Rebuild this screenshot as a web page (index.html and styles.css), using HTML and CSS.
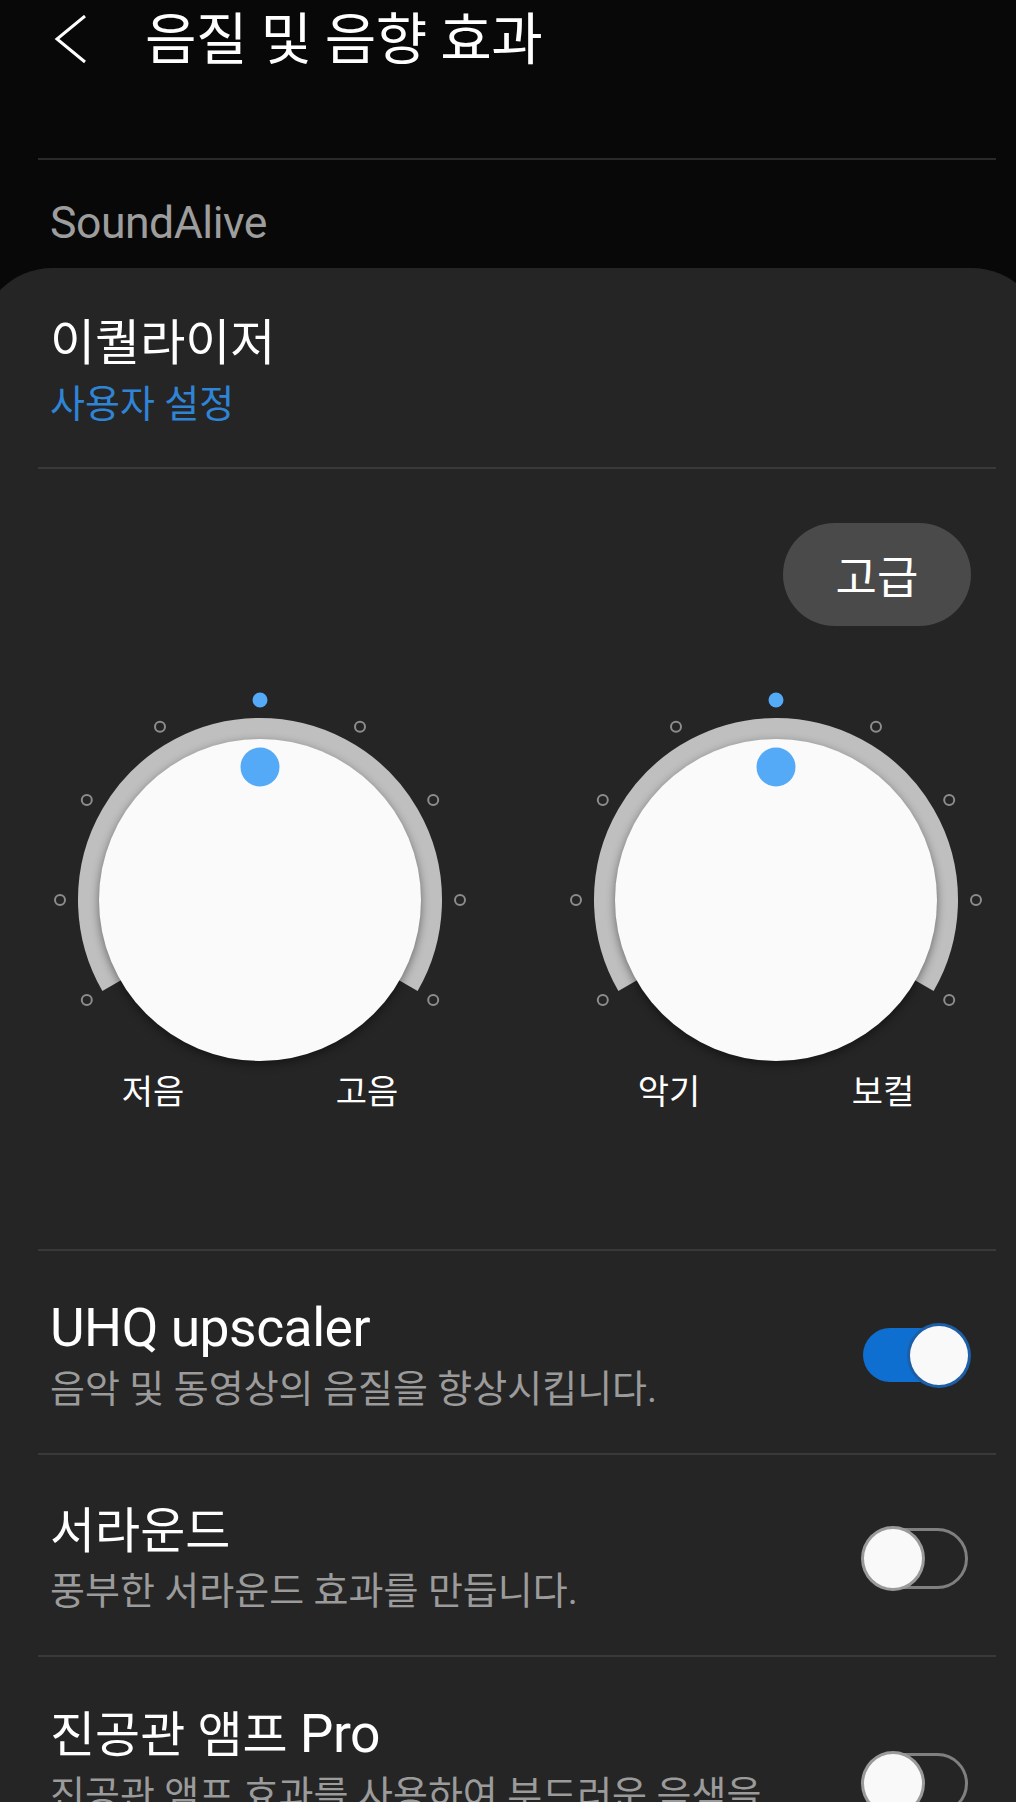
FILE: index.html
```html
<!DOCTYPE html>
<html lang="ko">
<head>
<meta charset="utf-8">
<title>음질 및 음향 효과</title>
<link rel="stylesheet" href="styles.css">
</head>
<body>
<div class="screen">
  <header class="appbar">
    <svg class="back" viewBox="0 0 36 50" width="36" height="50"><path d="M31 1 L3 24 L31 47" fill="none" stroke="#ffffff" stroke-width="3"/></svg>
    <h1 class="page-title">음질 및 음향 효과</h1>
  </header>
  <div class="top-divider"></div>
  <div class="section-label">SoundAlive</div>

  <section class="card">
    <div class="eq-head">
      <div class="item-title">이퀄라이저</div>
      <div class="item-sub blue">사용자 설정</div>
    </div>
    <div class="divider"></div>

    <div class="eq-panel">
      <div class="adv-row"><button class="adv">고급</button></div>
      <div class="knobs">
        <div class="knob">
          <svg class="dial" viewBox="0 0 440 372" width="440" height="372">
            <path d="M71.9 295.5 A171 171 0 1 1 368.1 295.5" fill="none" stroke="#bfbfbf" stroke-width="22"/>
            <circle class="disc" cx="220" cy="210" r="161" fill="#fafafa"/>
            <circle cx="220" cy="77" r="19.5" fill="#55aaf7"/>
            <g fill="none" stroke="#8c8c8c" stroke-width="2">
              <circle cx="46.8" cy="310" r="5"/>
              <circle cx="20" cy="210" r="5"/>
              <circle cx="46.8" cy="110" r="5"/>
              <circle cx="120" cy="36.8" r="5"/>
              <circle cx="320" cy="36.8" r="5"/>
              <circle cx="393.2" cy="110" r="5"/>
              <circle cx="420" cy="210" r="5"/>
              <circle cx="393.2" cy="310" r="5"/>
            </g>
            <circle cx="220" cy="10" r="7.5" fill="#55aaf7"/>
          </svg>
          <div class="labels"><span>저음</span><span>고음</span></div>
        </div>
        <div class="knob">
          <svg class="dial" viewBox="0 0 440 372" width="440" height="372">
            <path d="M71.9 295.5 A171 171 0 1 1 368.1 295.5" fill="none" stroke="#bfbfbf" stroke-width="22"/>
            <circle class="disc" cx="220" cy="210" r="161" fill="#fafafa"/>
            <circle cx="220" cy="77" r="19.5" fill="#55aaf7"/>
            <g fill="none" stroke="#8c8c8c" stroke-width="2">
              <circle cx="46.8" cy="310" r="5"/>
              <circle cx="20" cy="210" r="5"/>
              <circle cx="46.8" cy="110" r="5"/>
              <circle cx="120" cy="36.8" r="5"/>
              <circle cx="320" cy="36.8" r="5"/>
              <circle cx="393.2" cy="110" r="5"/>
              <circle cx="420" cy="210" r="5"/>
              <circle cx="393.2" cy="310" r="5"/>
            </g>
            <circle cx="220" cy="10" r="7.5" fill="#55aaf7"/>
          </svg>
          <div class="labels"><span>악기</span><span>보컬</span></div>
        </div>
      </div>
    </div>
    <div class="divider"></div>

    <div class="row">
      <div class="row-text">
        <div class="item-title"><span class="en">UHQ upscaler</span></div>
        <div class="item-sub">음악 및 동영상의 음질을 향상시킵니다.</div>
      </div>
      <div class="switch on"><span class="track"></span><span class="thumb"></span></div>
    </div>
    <div class="divider"></div>

    <div class="row">
      <div class="row-text">
        <div class="item-title">서라운드</div>
        <div class="item-sub">풍부한 서라운드 효과를 만듭니다.</div>
      </div>
      <div class="switch off"><span class="track"></span><span class="thumb"></span></div>
    </div>
    <div class="divider"></div>

    <div class="row">
      <div class="row-text">
        <div class="item-title">진공관 앰프 <span class="en">Pro</span></div>
        <div class="item-sub">진공관 앰프 효과를 사용하여 부드러운 음색을 만들어 줍니다.</div>
      </div>
      <div class="switch off"><span class="track"></span><span class="thumb"></span></div>
    </div>
  </section>
</div>
</body>
</html>
```

FILE: styles.css
```css
html, body {
  margin: 0;
  padding: 0;
}
body {
  background: #080808;
  width: 1016px;
  overflow: hidden;
  font-family: "Roboto", "Noto Sans CJK KR", sans-serif;
  color: #ffffff;
  word-break: keep-all;
}
.screen {
  width: 1016px;
}

/* app bar */
.appbar {
  height: 80px;
  display: flex;
  align-items: center;
}
.back {
  display: block;
  margin-left: 54px;
  flex: none;
}
.page-title {
  margin: 0 0 0 55px;
  font-size: 56px;
  font-weight: 400;
  line-height: 62px;
  letter-spacing: -0.5px;
}
.top-divider {
  height: 2px;
  background: #2a2a2a;
  margin: 78px 20px 0 38px;
}
.section-label {
  margin: 38px 0 0 50px;
  font-size: 44.6px;
  line-height: 50px;
  color: #9d9d9d;
  letter-spacing: -0.5px;
}

/* card */
.card {
  margin: 20px -28px 0 -20px;
  padding: 0 48px 0 58px;
  background: #252525;
  border-radius: 72px 72px 0 0;
  min-height: 1600px;
}
.divider {
  height: 2px;
  background: #393939;
}
.eq-head {
  padding: 48px 12px 40.5px;
}
.item-title {
  font-size: 49px;
  line-height: 56px;
  white-space: nowrap;
}
.item-title .en {
  font-size: 53.4px;
  letter-spacing: -0.5px;
}
.item-sub {
  margin-top: 10px;
  font-size: 38px;
  line-height: 44px;
  color: #9b9b9b;
}
.item-sub.blue {
  color: #2f84d6;
}

/* equalizer panel */
.eq-panel {
  padding: 54px 0 136px;
}
.adv-row {
  display: flex;
  justify-content: flex-end;
  padding-right: 25px;
}
.adv {
  width: 188px;
  height: 103px;
  border: none;
  border-radius: 52px;
  background: #4a4a4a;
  color: #ffffff;
  font-family: "Noto Sans CJK KR", sans-serif;
  font-size: 45px;
  padding: 0;
}
.knobs {
  display: flex;
  gap: 76px;
  margin-top: 64px;
  padding-left: 2px;
}
.knob {
  width: 440px;
}
.dial {
  display: block;
  overflow: visible;
}
.disc {
  filter: drop-shadow(0 3px 5px rgba(0, 0, 0, 0.45));
}
.labels {
  display: flex;
  justify-content: center;
  gap: 134px;
  margin-top: 9px;
  font-size: 34px;
  line-height: 42px;
}
.labels span {
  width: 80px;
  text-align: center;
}

/* switch rows */
.row {
  display: flex;
  align-items: center;
  padding: 49px 25px 41.5px 12px;
}
.row-text {
  flex: 1;
  min-width: 0;
  margin-right: 40px;
}
.row .item-sub {
  margin-top: 9.5px;
}
.switch {
  position: relative;
  flex: none;
  width: 110px;
  height: 65px;
}
.switch .track {
  position: absolute;
  box-sizing: border-box;
}
.switch .thumb {
  position: absolute;
  top: 0;
  box-sizing: border-box;
  width: 64px;
  height: 65px;
  border-radius: 50%;
  background: #f9f9f9;
}
.switch.on .track {
  left: 2px;
  right: 2px;
  top: 5px;
  height: 54px;
  border-radius: 27px;
  background: #0e6fd0;
}
.switch.on .thumb {
  right: 0;
  border: 3px solid #1c5fa6;
}
.switch.off .track {
  left: 4px;
  right: 3px;
  top: 2px;
  height: 61px;
  border-radius: 31px;
  border: 3px solid #808080;
}
.switch.off .thumb {
  left: 0;
  border: 3px solid #9a9a9a;
}
```
